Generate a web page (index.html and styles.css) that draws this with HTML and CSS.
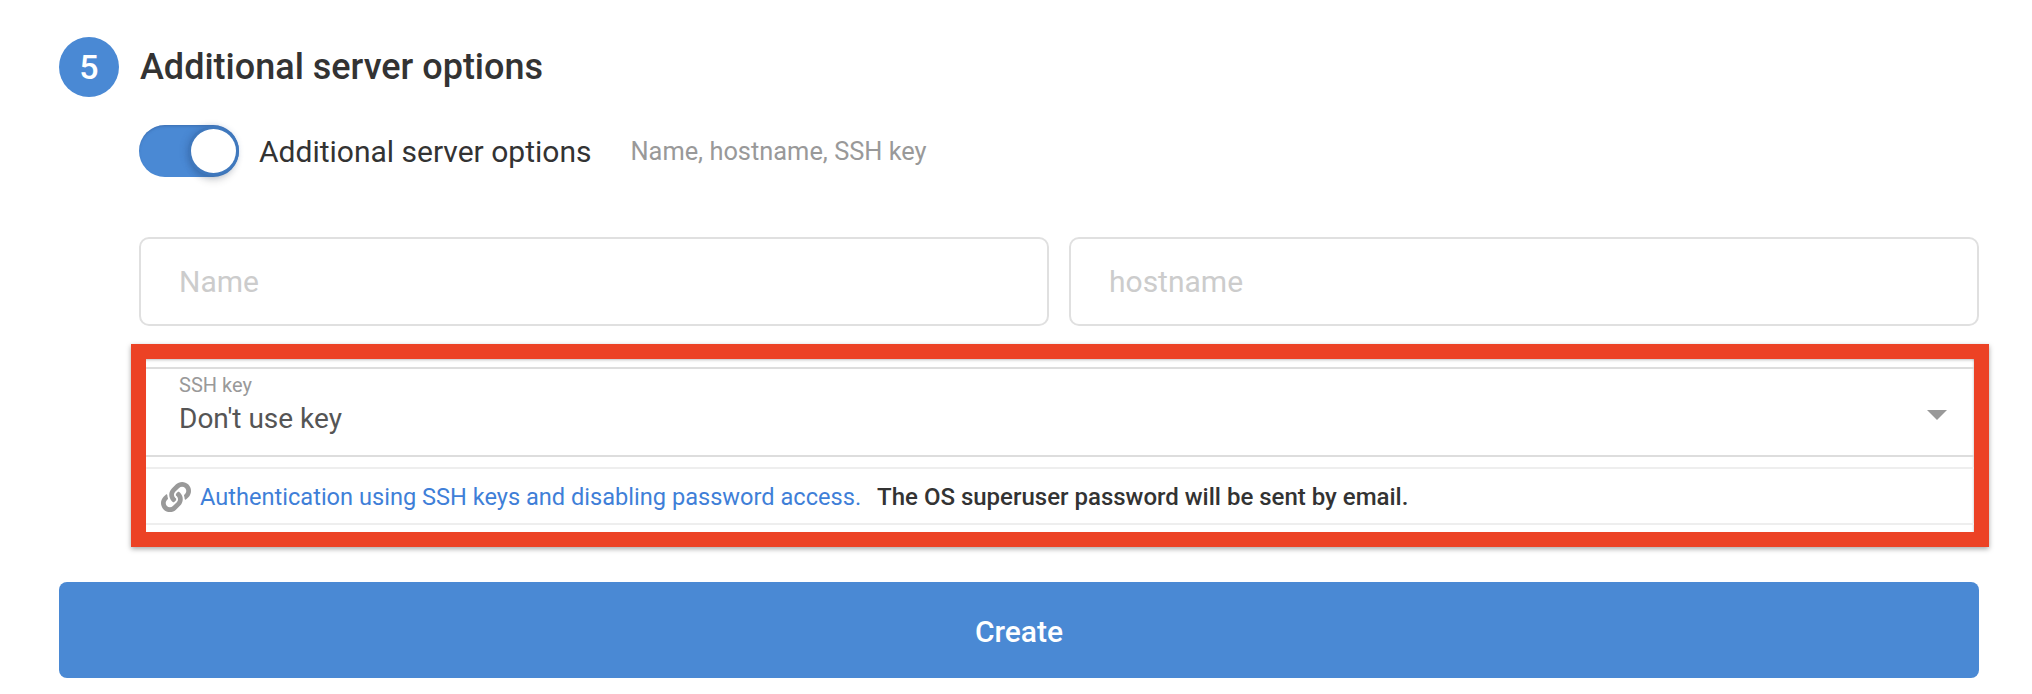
FILE: index.html
```html
<!DOCTYPE html>
<html lang="en">
<head>
<meta charset="utf-8">
<title>Additional server options</title>
<link rel="stylesheet" href="styles.css">
</head>
<body>
<main class="page">
  <header class="step">
    <span class="step-num">5</span>
    <h2 class="step-title">Additional server options</h2>
  </header>
  <div class="body">
    <div class="toggle-row">
      <span class="toggle"><span class="knob"></span></span>
      <span class="toggle-label">Additional server options</span>
      <span class="toggle-hint">Name, hostname, SSH key</span>
    </div>
    <div class="inputs">
      <div class="input">Name</div>
      <div class="input">hostname</div>
    </div>
    <section class="annot">
      <div class="select">
        <div class="select-text">
          <div class="select-label">SSH key</div>
          <div class="select-value">Don't use key</div>
        </div>
        <span class="caret"></span>
      </div>
      <div class="note">
        <svg class="link-icon" viewBox="0 0 512 512" aria-hidden="true"><path d="M326.612 185.391c59.747 59.809 58.927 155.698.36 214.59-.11.12-.24.25-.36.37l-67.2 67.2c-59.27 59.27-155.699 59.262-214.96 0-59.27-59.26-59.27-155.7 0-214.96l37.106-37.106c9.84-9.84 26.786-3.3 27.294 10.606.648 17.722 3.826 35.527 9.69 52.721 1.986 5.822.567 12.262-3.783 16.612l-13.087 13.087c-28.026 28.026-28.905 73.66-1.155 101.96 28.024 28.579 74.086 28.749 102.325.51l67.2-67.19c28.191-28.191 28.073-73.757 0-101.83-3.701-3.694-7.429-6.564-10.341-8.569a16.037 16.037 0 0 1-6.947-12.606c-.396-10.567 3.348-21.456 11.698-29.806l21.054-21.055c5.521-5.521 14.182-6.199 20.584-1.731a152.482 152.482 0 0 1 20.522 17.197zM467.547 44.449c-59.261-59.262-155.69-59.27-214.96 0l-67.2 67.2c-.12.12-.25.25-.36.37-58.566 58.892-59.387 154.781.36 214.59a152.454 152.454 0 0 0 20.521 17.196c6.402 4.468 15.064 3.789 20.584-1.731l21.054-21.055c8.35-8.35 12.094-19.239 11.698-29.806a16.037 16.037 0 0 0-6.947-12.606c-2.912-2.005-6.64-4.875-10.341-8.569-28.073-28.073-28.191-73.639 0-101.83l67.2-67.19c28.239-28.239 74.3-28.069 102.325.51 27.75 28.3 26.872 73.934-1.155 101.96l-13.087 13.087c-4.35 4.35-5.769 10.79-3.783 16.612 5.864 17.194 9.042 34.999 9.69 52.721.509 13.906 17.454 20.446 27.294 10.606l37.106-37.106c59.271-59.259 59.271-155.699.001-214.959z"/></svg>
        <a class="note-link" href="#">Authentication using SSH keys and disabling password access.</a>
        <strong class="note-strong">The OS superuser password will be sent by email.</strong>
      </div>
    </section>
  </div>
  <button class="create" type="button">Create</button>
</main>
</body>
</html>
```
FILE: styles.css
```css
* { box-sizing: border-box; }
html, body { margin: 0; background: #fff; }
body { font-family: Roboto, "Liberation Sans", sans-serif; color: #333; }
.page { padding: 37px 53px 0 59px; height: 694px; overflow: hidden; }

.step { display: flex; align-items: center; gap: 21px; height: 60px; }
.step-num {
  width: 60px; height: 60px; border-radius: 50%;
  background: #4a89d4; color: #fff;
  display: flex; align-items: center; justify-content: center;
  font-size: 34px; font-weight: 500;
}
.step-title { margin: 0; font-size: 36px; font-weight: 500; color: #333; }

.body { padding-left: 80px; }

.toggle-row { display: flex; align-items: center; margin-top: 28px; height: 52px; }
.toggle {
  width: 100px; height: 52px; border-radius: 26px;
  background: #4a89d4;
  display: flex; align-items: center; justify-content: flex-end;
  padding-right: 3px;
  box-shadow: inset 0 2px 3px -1px rgba(50,90,150,.6);
}
.knob {
  width: 45px; height: 44px; border-radius: 50%; background: #fff;
  box-shadow: 0 0 0 3px #3f78bd, -2px 0 6px 3px rgba(50,90,150,.35), 0 8px 8px -1px rgba(0,0,0,.16);
}
.toggle-label { margin-left: 20px; font-size: 30px; color: #333; }
.toggle-hint { margin-left: 39px; font-size: 25.4px; color: #999; }

.inputs { display: grid; grid-template-columns: 1fr 1fr; gap: 20px; margin-top: 60px; }
.input {
  height: 89px; border: 2px solid #e0e0e0; border-radius: 10px;
  padding-left: 38px; display: flex; align-items: center;
  font-size: 30px; color: #ccc;
}

.annot {
  margin: 18px -10px 0 -8px;
  border: 15px solid #ec4225;
  box-shadow: 0 2px 5px rgba(0,0,0,.35), inset 0 3px 3px -2px rgba(0,0,0,.25), inset -2px 0 2px -1px rgba(0,0,0,.12);
  height: 203px;
  background: #fff;
  padding-top: 8px;
}
.select {
  height: 90px;
  border-top: 2px solid #ddd; border-bottom: 2px solid #ddd;
  display: flex; align-items: flex-start; justify-content: space-between;
  padding: 4px 27px 0 33px;
}
.select-label { font-size: 20px; line-height: 24px; color: #999; }
.select-value { font-size: 28px; line-height: 36px; margin-top: 4px; color: #555; }
.caret {
  margin-top: 37px;
  width: 0; height: 0;
  border-left: 10px solid transparent; border-right: 10px solid transparent;
  border-top: 10px solid #999;
}
.note {
  margin-top: 10px; height: 58px; padding-top: 1px;
  border-top: 2px solid #eee; border-bottom: 2px solid #eee;
  display: flex; align-items: center;
  padding-left: 15px;
  font-size: 24px;
}
.link-icon { width: 30px; height: 30px; fill: #999; flex: none; }
.note-link { margin-left: 9px; font-size: 23.6px; color: #3f7fd8; text-decoration: none; }
.note-strong { margin-left: 16px; font-weight: 500; color: #333; }

.create {
  display: block; width: 100%; height: 96px; margin-top: 35px; padding-top: 4px;
  border: 0; border-radius: 8px;
  background: #4a89d4; color: #fff;
  font-family: inherit; font-size: 30px; font-weight: 500;
}
```
